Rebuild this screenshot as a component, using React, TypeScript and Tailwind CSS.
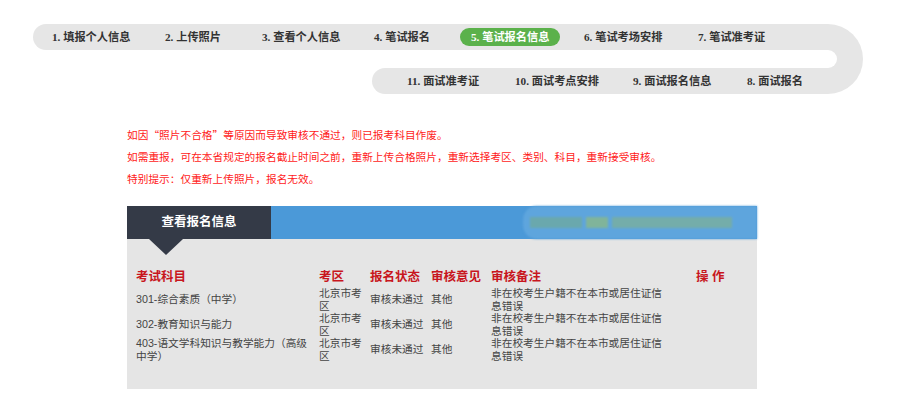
import React from 'react';

const topSteps = [
  { label: '1. 填报个人信息', w: 'w-[113px]' },
  { label: '2. 上传照片', w: 'w-[97px]' },
  { label: '3. 查看个人信息', w: 'w-[112px]' },
  { label: '4. 笔试报名', w: 'w-[86px]' },
];

const bottomSteps = [
  { label: '11. 面试准考证', w: 'w-[108px]' },
  { label: '10. 面试考点安排', w: 'w-[118px]' },
  { label: '9. 面试报名信息', w: 'w-[114px]' },
  { label: '8. 面试报名', w: 'w-auto' },
];

const rows = [
  { subject: '301-综合素质（中学）' },
  { subject: '302-教育知识与能力' },
  { subject: '403-语文学科知识与教学能力（高级中学）' },
];

const Steps: React.FC = () => (
  <div className="ml-[33px] flex w-[830px] text-[11.2px] font-bold text-[#333]">
    <div className="flex w-[795px] flex-col gap-[18px]">
      <div className="flex h-[26px] items-center rounded-l-full bg-[#e6e6e6] pl-[19px]">
        {topSteps.map((s) => (
          <span key={s.label} className={`${s.w} shrink-0 whitespace-nowrap`}>
            {s.label}
          </span>
        ))}
        <span className="w-[124px] shrink-0">
          <span className="inline-block h-[18px] whitespace-nowrap rounded-full bg-[#5bb14b] px-[11px] leading-[18px] text-white">
            5. 笔试报名信息
          </span>
        </span>
        <span className="w-[114px] shrink-0 whitespace-nowrap">6. 笔试考场安排</span>
        <span className="whitespace-nowrap">7. 笔试准考证</span>
      </div>
      <div className="ml-[339px] flex h-[26px] items-center rounded-l-full bg-[#e6e6e6] pl-[35px]">
        {bottomSteps.map((s) => (
          <span key={s.label} className={`${s.w} shrink-0 whitespace-nowrap`}>
            {s.label}
          </span>
        ))}
      </div>
    </div>
    {/* right-hand U turn */}
    <div className="h-[70px] w-[35px] rounded-r-[35px] border-y-[26px] border-r-[26px] border-l-0 border-[#e6e6e6]" />
  </div>
);

const Notes: React.FC = () => (
  <div className="ml-[127px] mt-[30px] font-['Noto_Sans_CJK_SC',sans-serif] text-[10.7px] leading-[22px] text-[#ff1a1a]">
    <p>如因“照片不合格”等原因而导致审核不通过，则已报考科目作废。</p>
    <p>如需重报，可在本省规定的报名截止时间之前，重新上传合格照片，重新选择考区、类别、科目，重新接受审核。</p>
    <p>特别提示：仅重新上传照片，报名无效。</p>
  </div>
);

const Panel: React.FC = () => (
  <div className="ml-[127px] mt-[16px] w-[630px]">
    <div className="flex h-[33px]">
      <div className="flex w-[144px] items-center justify-center bg-[#343a47] text-[12.5px] font-bold text-white">
        查看报名信息
      </div>
      <div className="flex flex-1 justify-end bg-[#4b99d8]">
        {/* blurred candidate info */}
        <div className="flex h-full w-[234px] items-center gap-[4px] rounded-l-[14px] bg-[#5ea5dd] pl-[7px] blur-[1px]">
          <div className="h-[11px] w-[52px] bg-[#6aa8ad]" />
          <div className="h-[11px] w-[22px] bg-[#80b49a]" />
          <div className="h-[11px] w-[120px] bg-[#74adaa]" />
        </div>
      </div>
    </div>
    <div className="h-[150px] bg-[#e5e5e5] pl-[9px]">
      <div className="ml-[13px] h-0 w-0 border-x-[17px] border-t-[16px] border-x-transparent border-t-[#343a47]" />
      <table className="mt-[12px] w-[612px] table-fixed border-collapse font-['Liberation_Sans','Noto_Sans_CJK_SC',sans-serif]">
        <colgroup>
          <col className="w-[183px]" />
          <col className="w-[51px]" />
          <col className="w-[61px]" />
          <col className="w-[60px]" />
          <col className="w-[205px]" />
          <col />
        </colgroup>
        <thead>
          <tr className="h-[20px] text-left text-[12.5px] font-bold text-[#c8161d]">
            <th className="p-0 font-bold">考试科目</th>
            <th className="p-0 font-bold">考区</th>
            <th className="p-0 font-bold">报名状态</th>
            <th className="p-0 font-bold">审核意见</th>
            <th className="p-0 font-bold">审核备注</th>
            <th className="p-0 font-bold">操 作</th>
          </tr>
        </thead>
        <tbody className="text-[10.7px] leading-[12.5px] text-[#444]">
          {rows.map((r) => (
            <tr key={r.subject} className="h-[25px]">
              <td className="p-0 pr-[6px] align-middle">{r.subject}</td>
              <td className="p-0 align-middle">
                <div className="w-[46px]">北京市考区</div>
              </td>
              <td className="p-0 align-middle">审核未通过</td>
              <td className="p-0 align-middle">其他</td>
              <td className="p-0 align-middle">
                <div className="w-[176px]">非在校考生户籍不在本市或居住证信息错误</div>
              </td>
              <td className="p-0" />
            </tr>
          ))}
        </tbody>
      </table>
    </div>
  </div>
);

export default function App() {
  return (
    <div className="min-h-[417px] w-[898px] bg-white pt-[24px] font-['Liberation_Serif','Noto_Sans_CJK_SC',serif]">
      <Steps />
      <Notes />
      <Panel />
    </div>
  );
}
